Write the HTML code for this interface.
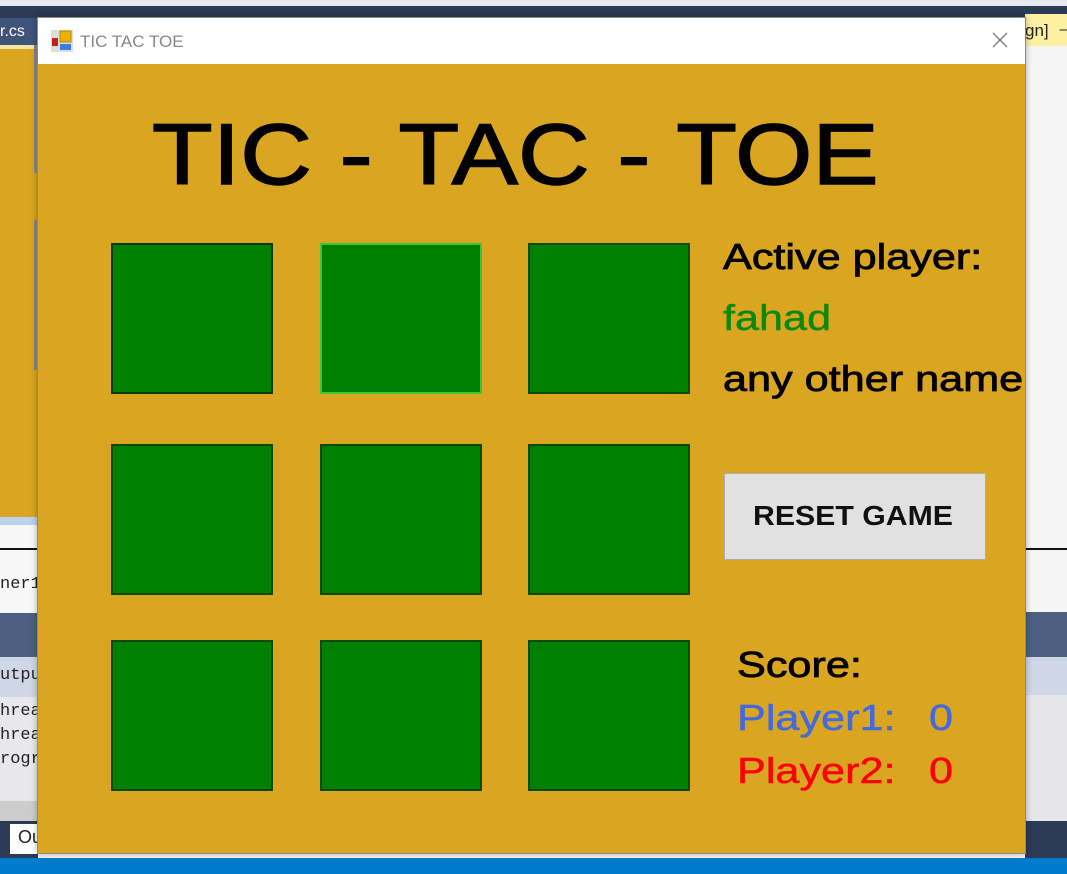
<!DOCTYPE html>
<html><head><meta charset="utf-8"><style>
*{margin:0;padding:0;box-sizing:border-box}
body{width:1067px;height:874px;position:relative;overflow:hidden;background:#f5f5f5;font-family:"Liberation Sans",Arial,sans-serif}
.a{position:absolute}
.sq{position:absolute;width:162px;height:151px;background:#008000;border:2px solid #0b4a0b}
.t{position:absolute;white-space:nowrap;line-height:1}
.w{transform:scaleX(1.2);transform-origin:left top}
</style></head><body>
<!-- background IDE -->
<div class="a" style="left:0;top:0;width:1067px;height:6px;background:#e8eaf0"></div>
<div class="a" style="left:0;top:6px;width:1067px;height:40px;background:#2b3a55"></div>
<div class="a" style="left:0;top:18px;width:38px;height:27px;background:#3f5478"></div>
<div class="t" style="left:0;top:24px;color:#fff;font-size:16px">r.cs</div>
<div class="a" style="left:0;top:45px;width:38px;height:4px;background:#f1e7a0"></div>
<div class="a" style="left:0;top:49px;width:38px;height:468px;background:#daa520"></div>
<div class="a" style="left:34px;top:45px;width:3px;height:128px;background:#888"></div>
<div class="a" style="left:34px;top:220px;width:3px;height:150px;background:#888"></div>
<div class="a" style="left:0;top:517px;width:38px;height:8px;background:#b9d3ee"></div>
<div class="a" style="left:0;top:525px;width:38px;height:88px;background:#f7f7f7"></div>
<div class="a" style="left:0;top:548px;width:38px;height:2px;background:#111"></div>
<div class="t" style="left:0;top:576px;font-size:17px;color:#222;font-family:'Liberation Mono',monospace">ner1</div>
<div class="a" style="left:0;top:613px;width:38px;height:44px;background:#4d6082"></div>
<div class="a" style="left:0;top:657px;width:38px;height:40px;background:#cfd6e6"></div>
<div class="t" style="left:0;top:667px;font-size:17px;color:#222;font-family:'Liberation Mono',monospace">utput</div>
<div class="a" style="left:0;top:697px;width:38px;height:104px;background:#e8e8ec"></div>
<div class="t" style="left:0;top:700px;font-size:17px;line-height:24px;color:#222;font-family:'Liberation Mono',monospace">hread<br>hread<br>rogra</div>
<div class="a" style="left:0;top:801px;width:38px;height:20px;background:#ccc"></div>
<div class="a" style="left:0;top:821px;width:38px;height:37px;background:#2b3a55"></div>
<div class="a" style="left:10px;top:824px;width:28px;height:30px;background:#fff"></div>
<div class="t" style="left:18px;top:828px;font-size:18px;color:#222">Ou</div>
<div class="a" style="left:0;top:858px;width:1067px;height:16px;background:#007acc"></div>
<div class="a" style="left:1025px;top:14px;width:42px;height:32px;background:#fdf0a0"></div>
<div class="t" style="left:1025px;top:22px;font-size:17px;color:#222">gn]&nbsp; ⊣</div>
<div class="a" style="left:1025px;top:46px;width:42px;height:504px;background:#f5f5f5"></div>
<div class="a" style="left:1025px;top:548px;width:42px;height:2px;background:#111"></div>
<div class="a" style="left:1025px;top:612px;width:42px;height:45px;background:#4d6082"></div>
<div class="a" style="left:1025px;top:657px;width:42px;height:38px;background:#cfd6e6"></div>
<div class="a" style="left:1025px;top:695px;width:42px;height:126px;background:#e6e6ea"></div>
<div class="a" style="left:1025px;top:821px;width:42px;height:37px;background:#2b3a55"></div>
<!-- window -->
<div class="a" style="left:37px;top:17px;width:989px;height:837px;background:#daa520;border:1px solid #8a8a8a;box-shadow:0 0 6px rgba(0,0,0,.3)"></div>
<div class="a" style="left:38px;top:18px;width:987px;height:46px;background:#fff"></div>
<svg class="a" style="left:51px;top:30px" width="22" height="22" viewBox="0 0 22 22">
<rect x="0" y="0" width="22" height="22" fill="#ddd"/><rect x="9" y="1" width="11" height="11" fill="#e8b400" stroke="#b88a00"/><rect x="1" y="8" width="6" height="8" fill="#c0201c"/><rect x="9" y="14" width="11" height="6" fill="#3b7fe0"/></svg>
<div class="t" style="left:80px;top:33px;font-size:17px;color:#888">TIC TAC TOE</div>
<svg class="a" style="left:992px;top:32px" width="16" height="16"><path d="M1 1L15 15M15 1L1 15" stroke="#777" stroke-width="1.3"/></svg>
<div class="t" style="left:152px;top:112px;font-size:86px;color:#000;-webkit-text-stroke:1.5px #000;transform:scaleX(1.155);transform-origin:left top">TIC - TAC - TOE</div>
<div class="sq" style="left:111px;top:243px;border-color:#0a3a0a"></div>
<div class="sq" style="left:320px;top:243px;border-color:#3cc43c"></div>
<div class="sq" style="left:528px;top:243px"></div>
<div class="sq" style="left:111px;top:444px"></div>
<div class="sq" style="left:320px;top:444px"></div>
<div class="sq" style="left:528px;top:444px"></div>
<div class="sq" style="left:111px;top:640px"></div>
<div class="sq" style="left:320px;top:640px"></div>
<div class="sq" style="left:528px;top:640px"></div>
<div class="t w" style="left:723px;top:239px;font-size:36px;color:#000;-webkit-text-stroke:.8px #000">Active player:</div>
<div class="t w" style="left:723px;top:300px;font-size:36px;color:#0a8a0a;-webkit-text-stroke:.4px #0a8a0a">fahad</div>
<div class="t w" style="left:723px;top:361px;font-size:36px;color:#000;-webkit-text-stroke:.8px #000">any other name</div>
<div class="a" style="left:724px;top:473px;width:262px;height:87px;background:#e1e1e1;border:1px solid #adadad"></div>
<div class="t" style="left:753px;top:502px;font-size:28px;font-weight:bold;color:#111;transform:scaleX(1.08);transform-origin:left top">RESET GAME</div>
<div class="t w" style="left:737px;top:647px;font-size:36px;color:#000;-webkit-text-stroke:.8px #000">Score:</div>
<div class="t w" style="left:737px;top:700px;font-size:36px;color:#4169e1;-webkit-text-stroke:.5px #4169e1">Player1:</div>
<div class="t w" style="left:929px;top:700px;font-size:36px;color:#4169e1;-webkit-text-stroke:.5px #4169e1">0</div>
<div class="t w" style="left:737px;top:753px;font-size:36px;color:#ff0000;-webkit-text-stroke:.5px #f00">Player2:</div>
<div class="t w" style="left:929px;top:753px;font-size:36px;color:#ff0000;-webkit-text-stroke:.5px #f00">0</div>
</body></html>
